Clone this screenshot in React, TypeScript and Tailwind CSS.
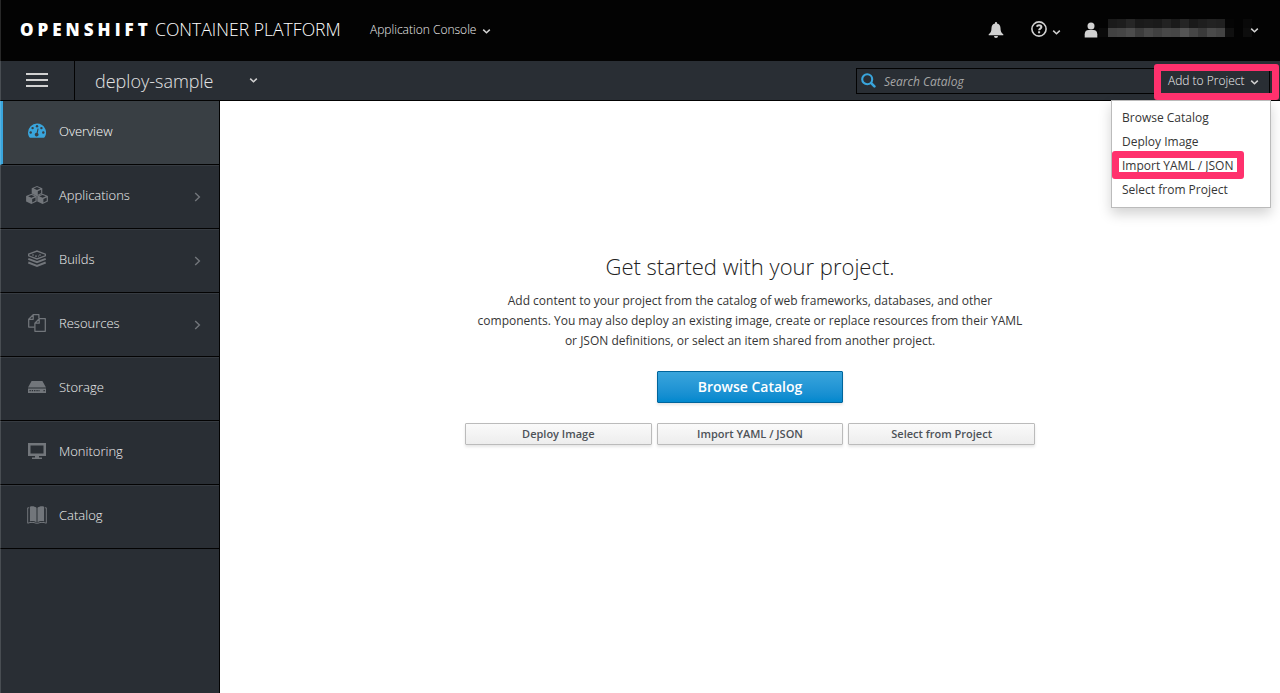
import type { ReactNode } from "react";

const font = "font-['Open_Sans','Noto_Sans',sans-serif]";

function Caret({ className = "" }: { className?: string }) {
  return (
    <svg className={`shrink-0 text-[#d1d1d1] ${className}`} width="9" height="7" viewBox="0 0 9 7" fill="none" stroke="currentColor" strokeWidth="1.5">
      <path d="M1.2 1.6 4.5 4.8 7.8 1.6" />
    </svg>
  );
}

function Gauge() {
  return (
    <svg width="18" height="16" viewBox="0 0 18 16">
      <path fill="currentColor" d="M9 0.5a9 9 0 0 0-9 9c0 1.8.5 3.4 1.4 4.8.2.3.5.5.8.5h13.6c.3 0 .6-.2.8-.5A9 9 0 0 0 9 .5z" />
      <g fill="#393f44">
        <circle cx="9" cy="3.3" r="1.2" />
        <circle cx="4.6" cy="5.1" r="1.2" />
        <circle cx="13.4" cy="5.1" r="1.2" />
        <circle cx="2.7" cy="9.5" r="1.2" />
        <circle cx="15.3" cy="9.5" r="1.2" />
        <path d="M9.6 5.4l1 .3-.9 4.3a1.9 1.9 0 1 1-1.1-.3z" />
      </g>
    </svg>
  );
}

function Cube({ x, y }: { x: number; y: number }) {
  return (
    <g transform={`translate(${x} ${y})`}>
      <path fill="currentColor" d="M5.3 0 10.6 2.2V7.6L5.3 10.2 0 7.6V2.2z" />
      <path fill="#292e34" d="M5.3 1.1 8.6 2.5 5.3 3.9 2 2.5zM6.1 5.2 9.4 3.8V7L6.1 8.7z" />
    </g>
  );
}

function Cubes() {
  return (
    <svg className="-ml-px" width="22" height="18" viewBox="0 0 22 18">
      <Cube x={5.7} y={0} />
      <Cube x={0.1} y={7.8} />
      <Cube x={11.3} y={7.8} />
    </svg>
  );
}

function Layers() {
  return (
    <svg width="18" height="18" viewBox="0 0 18 18" fill="none" stroke="currentColor">
      <path strokeWidth="1.4" d="M.6 4.2 9 1.1l8.4 3.1v1.6L9 9 .6 5.8z" />
      <path strokeWidth="1.2" strokeDasharray="2 1.2" d="M4 5h3M11 5h3M7 6.2h4" />
      <path strokeWidth="1.9" d="M.3 8.8 9 12.2l8.7-3.4M.3 12.5 9 16l8.7-3.5" />
    </svg>
  );
}

function Files() {
  return (
    <svg width="18" height="18" viewBox="0 0 18 18" fill="none" stroke="currentColor" strokeWidth="1.25" strokeLinejoin="round">
      <path d="M6.6 13.1H.7V5.3L5.2.7h5.7v3.6M5.2.7v4.6H.7" />
      <path d="M11.2 4.7h6.1v12.6H6.9V9.2zM11.2 4.7v4.5H6.9" />
    </svg>
  );
}

function Drive() {
  return (
    <svg width="18" height="12" viewBox="0 0 18 12">
      <path fill="currentColor" d="M3.6 0h10.8L18 6.6H0zM0 7.4h18V12H0z" />
      <path fill="#292e34" d="M1.5 9h1.3v1.3H1.5zM3.8 9h1.3v1.3H3.8zM6.1 9h1.3v1.3H6.1zM8.4 9h1.3v1.3H8.4zM10.5 9h1v1.3h-1zM15.5 9h1.3v1.3h-1.3z" />
    </svg>
  );
}

function Screen() {
  return (
    <svg width="18" height="16" viewBox="0 0 18 16">
      <path fill="currentColor" fillRule="evenodd" d="M0 0h18v13h-7v1.4h3V16H4v-1.4h3V13H0zM2.5 2.5v8h13v-8z" />
    </svg>
  );
}

function Book() {
  return (
    <svg width="20" height="18" viewBox="0 0 20 18">
      <path fill="currentColor" d="M2.9.8C5.2-.2 7.6.4 9.500 1.7V16.3C7.4 15 5 14.7 2.9 15.5zM17.1.8C14.8-.2 12.4.4 10.5 1.7V16.3c2.1-1.3 4.5-1.6 6.6-.8z" />
      <path fill="none" stroke="currentColor" strokeWidth="1" d="M2.2 1.8H.7v15.4c3-1.2 5.800-1 8.300 0h2c2.500-1 5.300-1.200 8.300 0V1.800h-1.500" />
    </svg>
  );
}

type Item = { label: string; icon: ReactNode; arrow?: boolean; active?: boolean };

const items: Item[] = [
  { label: "Overview", icon: <Gauge />, active: true },
  { label: "Applications", icon: <Cubes />, arrow: true },
  { label: "Builds", icon: <Layers />, arrow: true },
  { label: "Resources", icon: <Files />, arrow: true },
  { label: "Storage", icon: <Drive /> },
  { label: "Monitoring", icon: <Screen /> },
  { label: "Catalog", icon: <Book /> },
];

function NavItem({ item }: { item: Item }) {
  return (
    <li
      className={`flex h-16 items-center border-b border-[#030303] ${
        item.active ? "border-l-[3px] border-l-[#39a5dc] bg-[#393f44] pl-[23px] text-white" : "bg-[#292e34] pl-[26px] text-[#f0f0f0] shadow-[inset_0_1px_0_#363b41]"
      }`}
    >
      <span className={`flex w-[22px] justify-center pb-[3px] ${item.active ? "text-[#39a5dc]" : "text-[#72767b]"}`}>{item.icon}</span>
      <span className="ml-[11px] flex-1 pb-[3px] text-[13px] font-light leading-5">{item.label}</span>
      {item.arrow && (
        <svg className="mr-[18px]" width="7" height="10" viewBox="0 0 7 10" fill="none" stroke="#72767b" strokeWidth="1.4">
          <path d="M1.2 1 5.4 5 1.2 9" />
        </svg>
      )}
    </li>
  );
}

const maskRows = [
  ["bg-[#030303]", "bg-[#1a1a1a]", "bg-[#1d1d1d]", "bg-[#262626]", "bg-[#1a1a1a]", "bg-[#1c1c1c]", "bg-[#1a1a1a]", "bg-[#222222]", "bg-[#1a1a1a]", "bg-[#252525]", "bg-[#191919]", "bg-[#1e1e1e]", "bg-[#222222]", "bg-[#202020]", "bg-[#050505]", "bg-[#030303]", "bg-[#090909]"],
  ["bg-[#0a0a0a]", "bg-[#424242]", "bg-[#454545]", "bg-[#4c4c4c]", "bg-[#3c3c3c]", "bg-[#484848]", "bg-[#404040]", "bg-[#484848]", "bg-[#464646]", "bg-[#545454]", "bg-[#464646]", "bg-[#3a3a3a]", "bg-[#4a4a4a]", "bg-[#444444]", "bg-[#101010]", "bg-[#030303]", "bg-[#0d0d0d]"],
];

function TopBar() {
  return (
    <header className="flex h-[61px] shrink-0 items-center bg-[#030303] pl-5 text-white">
      <h1 className="flex items-baseline whitespace-nowrap pb-[2px] text-[17.6px] leading-6">
        <span className="w-[135px] text-[17px] font-extrabold tracking-[4px]">OPENSHIFT</span>
        <span className="w-[186px] font-light">CONTAINER PLATFORM</span>
      </h1>
      <div className="ml-[29px] flex items-center pb-[2px] text-xs font-light text-[#f0f0f0]">
        Application Console
        <Caret className="ml-[6px] mt-[3px]" />
      </div>
      <div className="ml-auto flex items-center text-[#d1d1d1]">
        <svg className="mb-[2px]" width="16" height="16" viewBox="0 0 16 16" fill="currentColor">
          <path d="M8 0c.6 0 1 .4 1 1v.5c2.2.5 3.5 2.3 3.5 4.5 0 3.5 1 5 2.8 6.3V13.3H.7V12.3C2.5 11 3.5 9.5 3.5 6c0-2.2 1.3-4 3.5-4.5V1c0-.6.4-1 1-1zM6 14h4a2 2 0 0 1-4 0z" />
        </svg>
        <svg className="mb-[3px] ml-[27px]" width="16" height="16" viewBox="0 0 16 16" fill="none" stroke="currentColor">
          <circle cx="8" cy="8" r="7.1" strokeWidth="1.6" />
          <path strokeWidth="2" d="M5.7 5.7C6.2 4.6 7 4.2 8 4.2c1.4 0 2.4.8 2.4 1.9 0 1.5-2.3 1.5-2.3 3.1M8.1 10.3v2" />
        </svg>
        <Caret className="ml-[5px] mt-[3px]" />
        <svg className="mb-[2px] ml-[23px]" width="14" height="16" viewBox="0 0 14 16" fill="currentColor">
          <circle cx="7" cy="4" r="3.5" />
          <path d="M.7 15.5v-3.2C.7 9.5 2.3 8 4.5 8h5c2.2 0 3.8 1.5 3.8 4.3v3.2z" />
        </svg>
        <div className="mb-[5px] ml-px w-[153px]">
          {maskRows.map((row, r) => (
            <div key={r} className="flex">
              {row.map((tone, c) => (
                <span key={c} className={`h-[9px] w-[9px] ${tone}`} />
              ))}
            </div>
          ))}
        </div>
        <Caret className="-ml-[2px] mr-[21px]" />
      </div>
    </header>
  );
}

const menu = ["Browse Catalog", "Deploy Image", "Import YAML / JSON", "Select from Project"];

function ProjectBar() {
  return (
    <div className="relative flex h-10 shrink-0 border-b border-[#030303] bg-[#292e34] text-[#d1d1d1]">
      <button className="flex w-[75px] items-center justify-center border-r border-[#030303] pb-[2px]">
        <svg width="22" height="14" viewBox="0 0 22 14" fill="currentColor">
          <path d="M0 0h22v2H0zM0 6h22v2H0zM0 12h22v2H0z" />
        </svg>
      </button>
      <div className="flex w-[183px] items-center justify-between pl-5 text-[18px] font-light text-[#e4e4e4]">
        <span className="pt-[2px]">deploy-sample</span>
        <Caret />
      </div>
      <div className="ml-auto mr-[10px] mt-[7px] flex h-[26px]">
        <div className="flex w-[305px] items-center border border-r-0 border-[#030303] pl-[4px] text-xs italic text-[#a6a6a6]">
          <svg className="mb-px mr-2" width="15" height="15" viewBox="0 0 15 15" fill="none" stroke="#39a5dc">
            <circle cx="6.2" cy="6.2" r="5" strokeWidth="2.1" />
            <path strokeWidth="2.6" strokeLinecap="round" d="M10.2 10.2l3.2 3.2" />
          </svg>
          <span className="pt-[2px]">Search Catalog</span>
        </div>
        <button className="flex w-[109px] items-center border border-l-0 border-[#030303] pl-[7px] pb-[1px] text-xs font-light text-[#f0f0f0]">
          Add to Project
          <Caret className="ml-[5px] mt-[3px]" />
        </button>
      </div>
      <ul className="absolute right-[9px] top-[39px] z-10 h-[108px] w-[160px] border border-[#bbb] bg-white py-[5px] text-xs leading-6 text-[#363636] shadow-[0_6px_12px_rgba(3,3,3,0.175)]">
        {menu.map((entry) => (
          <li key={entry} className="h-6 pl-[10px]">{entry}</li>
        ))}
      </ul>
      <div className="absolute right-[1px] top-[3px] z-20 h-[36px] w-[125px] rounded-[3px] border-[7px] border-[#ff316d]" />
      <div className="absolute right-[36px] top-[90px] z-20 h-[28px] w-[132px] rounded-[3px] border-[7px] border-[#ff316d]" />
    </div>
  );
}

const actions = ["Deploy Image", "Import YAML / JSON", "Select from Project"];

export default function App() {
  return (
    <div className={`relative flex h-[693px] w-[1280px] flex-col overflow-hidden bg-white ${font}`}>
      <TopBar />
      <ProjectBar />
      <div className="flex flex-1">
        <nav className="w-[220px] border-r border-[#030303] bg-[#292e34]">
          <ul>
            {items.map((item) => (
              <NavItem key={item.label} item={item} />
            ))}
          </ul>
        </nav>
        <main className="flex flex-1 flex-col items-center pt-[150px] text-[#363636]">
          <h2 className="text-[22px] font-light leading-[30px] text-[#222]">Get started with your project.</h2>
          <p className="mt-[10px] text-center text-xs leading-5">
            Add content to your project from the catalog of web frameworks, databases, and other
            <br />
            components. You may also deploy an existing image, create or replace resources from their YAML
            <br />
            or JSON definitions, or select an item shared from another project.
          </p>
          <button className="mt-5 h-8 w-[186px] rounded-[1px] border border-[#00659c] bg-linear-to-b from-[#39a5dc] to-[#0088ce] text-sm font-semibold text-white shadow-[0_2px_3px_rgba(3,3,3,0.1)]">
            Browse Catalog
          </button>
          <div className="mt-5 grid w-[570px] grid-cols-3 gap-[5px]">
            {actions.map((a) => (
              <button key={a} className="h-[22px] rounded-[1px] border border-[#bbb] bg-linear-to-b from-[#fafafa] to-[#ededed] pb-[2px] text-[11px] font-semibold leading-none text-[#4d5258] shadow-[0_2px_3px_rgba(3,3,3,0.1)]">
                {a}
              </button>
            ))}
          </div>
        </main>
      </div>
      <div className="absolute left-0 top-0 h-full w-px bg-white/15" />
    </div>
  );
}
